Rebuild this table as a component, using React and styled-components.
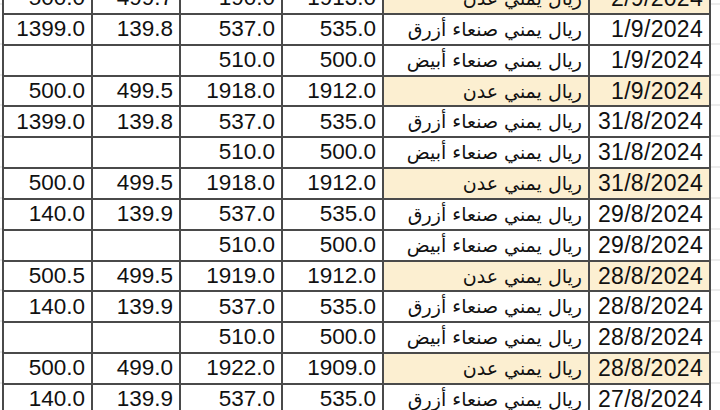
import styled, { createGlobalStyle } from "styled-components";

const GlobalStyle = createGlobalStyle`
  html, body {
    margin: 0;
    padding: 0;
    background: #fff;
    overflow: hidden;
  }
`;

const Page = styled.div`
  width: 720px;
  height: 410px;
  overflow: hidden;
  display: flex;
  align-items: flex-start;
  // faint spreadsheet gridlines right of the table
  background-image: repeating-linear-gradient(
    to bottom,
    transparent 0,
    transparent 29.83px,
    #d9d9d9 29.83px,
    #d9d9d9 30.83px
  );
  background-position: 0 13.5px;
`;

const Sheet = styled.div`
  display: grid;
  grid-template-columns: 87px 86px 100px 99px 204px 119px;
  grid-auto-rows: 28.83px;
  gap: 2px;
  padding: 2px;
  margin: -17.83px 0 0 2px;
  background: #4a4a4a;
`;

const Cell = styled.div`
  display: flex;
  align-items: center;
  justify-content: flex-end;
  padding: 0 6px 0 0;
  background: ${(p) => (p.$hl ? "#fcefd1" : "#fff")};
  color: #111;
  font-family: "Liberation Sans", Arial, sans-serif;
  font-size: 22.5px;
  line-height: 1;
  white-space: nowrap;
  overflow: hidden;
`;

const DateCell = styled(Cell)`
  font-size: 23px;
  letter-spacing: 0.3px;
`;

const ArabicCell = styled(Cell)`
  direction: rtl;
  justify-content: flex-start;
  padding: 0 6px 0 0;
  font-family: "DejaVu Sans", "Noto Sans", sans-serif;
  font-size: 19px;
`;

const AZRAQ = "ريال يمني صنعاء أزرق";
const ABYAD = "ريال يمني صنعاء أبيض";
const ADEN = "ريال يمني عدن";

const rows = [
  ["500.0", "499.7", "190.0", "1913.0", ADEN, "2/9/2024"],
  ["1399.0", "139.8", "537.0", "535.0", AZRAQ, "1/9/2024"],
  ["", "", "510.0", "500.0", ABYAD, "1/9/2024"],
  ["500.0", "499.5", "1918.0", "1912.0", ADEN, "1/9/2024"],
  ["1399.0", "139.8", "537.0", "535.0", AZRAQ, "31/8/2024"],
  ["", "", "510.0", "500.0", ABYAD, "31/8/2024"],
  ["500.0", "499.5", "1918.0", "1912.0", ADEN, "31/8/2024"],
  ["140.0", "139.9", "537.0", "535.0", AZRAQ, "29/8/2024"],
  ["", "", "510.0", "500.0", ABYAD, "29/8/2024"],
  ["500.5", "499.5", "1919.0", "1912.0", ADEN, "28/8/2024"],
  ["140.0", "139.9", "537.0", "535.0", AZRAQ, "28/8/2024"],
  ["", "", "510.0", "500.0", ABYAD, "28/8/2024"],
  ["500.0", "499.0", "1922.0", "1909.0", ADEN, "28/8/2024"],
  ["140.0", "139.9", "537.0", "535.0", AZRAQ, "27/8/2024"],
];

export default function App() {
  return (
    <>
      <GlobalStyle />
      <Page>
        <Sheet>
          {rows.map((r, i) => {
            const hl = r[4] === ADEN;
            return [
              <Cell key={i + "a"}>{r[0]}</Cell>,
              <Cell key={i + "b"}>{r[1]}</Cell>,
              <Cell key={i + "c"}>{r[2]}</Cell>,
              <Cell key={i + "d"}>{r[3]}</Cell>,
              <ArabicCell key={i + "e"} $hl={hl}>
                {r[4]}
              </ArabicCell>,
              <DateCell key={i + "f"} $hl={hl}>
                {r[5]}
              </DateCell>,
            ];
          })}
        </Sheet>
      </Page>
    </>
  );
}
